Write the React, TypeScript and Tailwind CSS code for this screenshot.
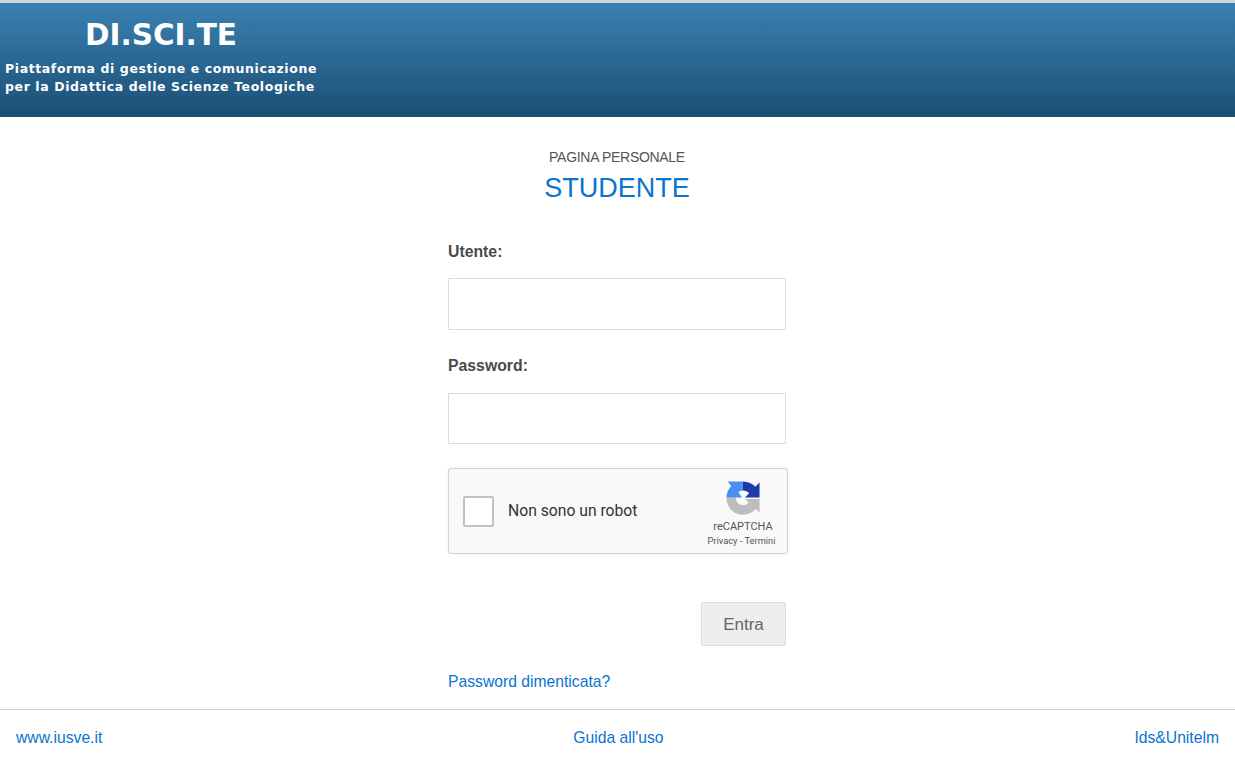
import { useState } from "react"

function RecaptchaLogo() {
  return (
    <svg width="34" height="34" viewBox="0 0 36 36" className="block">
      {/* grey arc, bottom half with the arrow on the right */}
      <path d="M0.500 17.500 L10.500 17.500 C10.500 22.500 14 25.500 18 25.500 C20.500 25.500 22.500 24.500 24 23 L20.500 19 L35.500 19 L35.500 33.500 L31.500 29.500 C28 33.500 23.500 35.800 18 35.800 C8 35.800 0.500 28 0.500 17.500 Z" fill="#bdbdbd" />
      {/* light blue arc, top left */}
      <path d="M0.500 17.500 C0.500 12.500 2.500 8.500 5.500 5.500 L2 0.500 L18 0.500 L18 10 C15.500 10 14 11 13 12 L17 17.500 Z" fill="#4a90f2" />
      {/* dark blue arc, top right */}
      <path d="M18 0.500 C23.500 0.500 28 2.800 31 6 L35.500 1.500 L35.500 17.500 L20 17.500 L24.500 13 C22.500 11 21 10 18 10 Z" fill="#1c3aa9" />
    </svg>
  )
}

function Field({ label, gap, inputHeight }: { label: string; gap: string; inputHeight: string }) {
  const [value, setValue] = useState("")
  return (
    <div>
      <label className="block text-[15.800px] leading-[20px] font-bold text-[#4a4a4a]">{label}</label>
      <input
        type="text"
        value={value}
        onChange={(e) => setValue(e.target.value)}
        className={`block w-full border border-[#dddddd] bg-white px-3 text-[16px] outline-none ${gap} ${inputHeight}`}
      />
    </div>
  )
}

export default function App() {
  return (
    <div className="flex h-[778px] flex-col overflow-hidden bg-white font-['Liberation_Sans',Arial,sans-serif]">
      <header className="h-[117px] border-t-[3px] border-[#d4d6d8] bg-gradient-to-b from-[#3a81b2] to-[#1b4f74] pt-[15px] pl-[5px] font-['DejaVu_Sans',sans-serif] text-white">
        <div className="w-[312px]">
          <h1 className="text-center text-[29.500px] leading-[34px] font-bold">DI.SCI.TE</h1>
          <p className="mt-[8px] text-[12.500px] leading-[18px] font-bold tracking-[0.600px] whitespace-nowrap">
            Piattaforma di gestione e comunicazione
            <br />
            per la Didattica delle Scienze Teologiche
          </p>
        </div>
      </header>

      <main className="ml-[448px] w-[338px] flex-1">
        <div className="pt-[32px] text-center">
          <div className="text-[14px] leading-[16px] tracking-[-0.300px] text-[#555555]">PAGINA PERSONALE</div>
          <h2 className="mt-[7px] text-[27px] leading-[32px] text-[#0a74cf]">STUDENTE</h2>
        </div>

        <form className="mt-[38px]">
          <Field label="Utente:" gap="mt-[16px]" inputHeight="h-[52px]" />
          <div className="mt-[26px]">
            <Field label="Password:" gap="mt-[17px]" inputHeight="h-[51px]" />
          </div>

          <div className="mt-[24px] flex h-[86px] w-[340px] items-center rounded-[3px] border border-[#d3d3d3] bg-[#f9f9f9] pr-[9px] pl-[14px] font-['Roboto',sans-serif] shadow-[0_0_3px_rgba(0,0,0,0.08)]">
            <div className="h-[31px] w-[31px] rounded-[2px] border-2 border-[#c1c1c1] bg-white" />
            <span className="ml-[14px] flex-1 text-[15.700px] text-[#333333]">Non sono un robot</span>
            <div className="flex w-[70px] flex-col items-center pt-[5px]">
              <RecaptchaLogo />
              <div className="mt-[6px] text-[11px] leading-[12px] text-[#555555]">reCAPTCHA</div>
              <div className="mt-[2px] pr-[3px] text-[9.300px] leading-[11px] whitespace-nowrap text-[#555555]">Privacy - Termini</div>
            </div>
          </div>

          <div className="mt-[48px] flex justify-end">
            <button
              type="button"
              className="h-[44px] w-[85px] rounded-[2px] border border-[#dddddd] bg-[#eeeeee] pt-[2px] text-[17px] text-[#666666]"
            >
              Entra
            </button>
          </div>

          <a href="#" className="mt-[26px] block text-[15.700px] leading-[20px] text-[#0a74cf]">
            Password dimenticata?
          </a>
        </form>
      </main>

      <footer className="flex h-[69px] items-start justify-between border-t border-[#cccccc] px-[16px] pt-[18px] text-[15.700px] leading-[20px] text-[#0a74cf]">
        <a href="#">www.iusve.it</a>
        <a href="#">Guida all'uso</a>
        <a href="#">Ids&amp;Unitelm</a>
      </footer>
    </div>
  )
}
